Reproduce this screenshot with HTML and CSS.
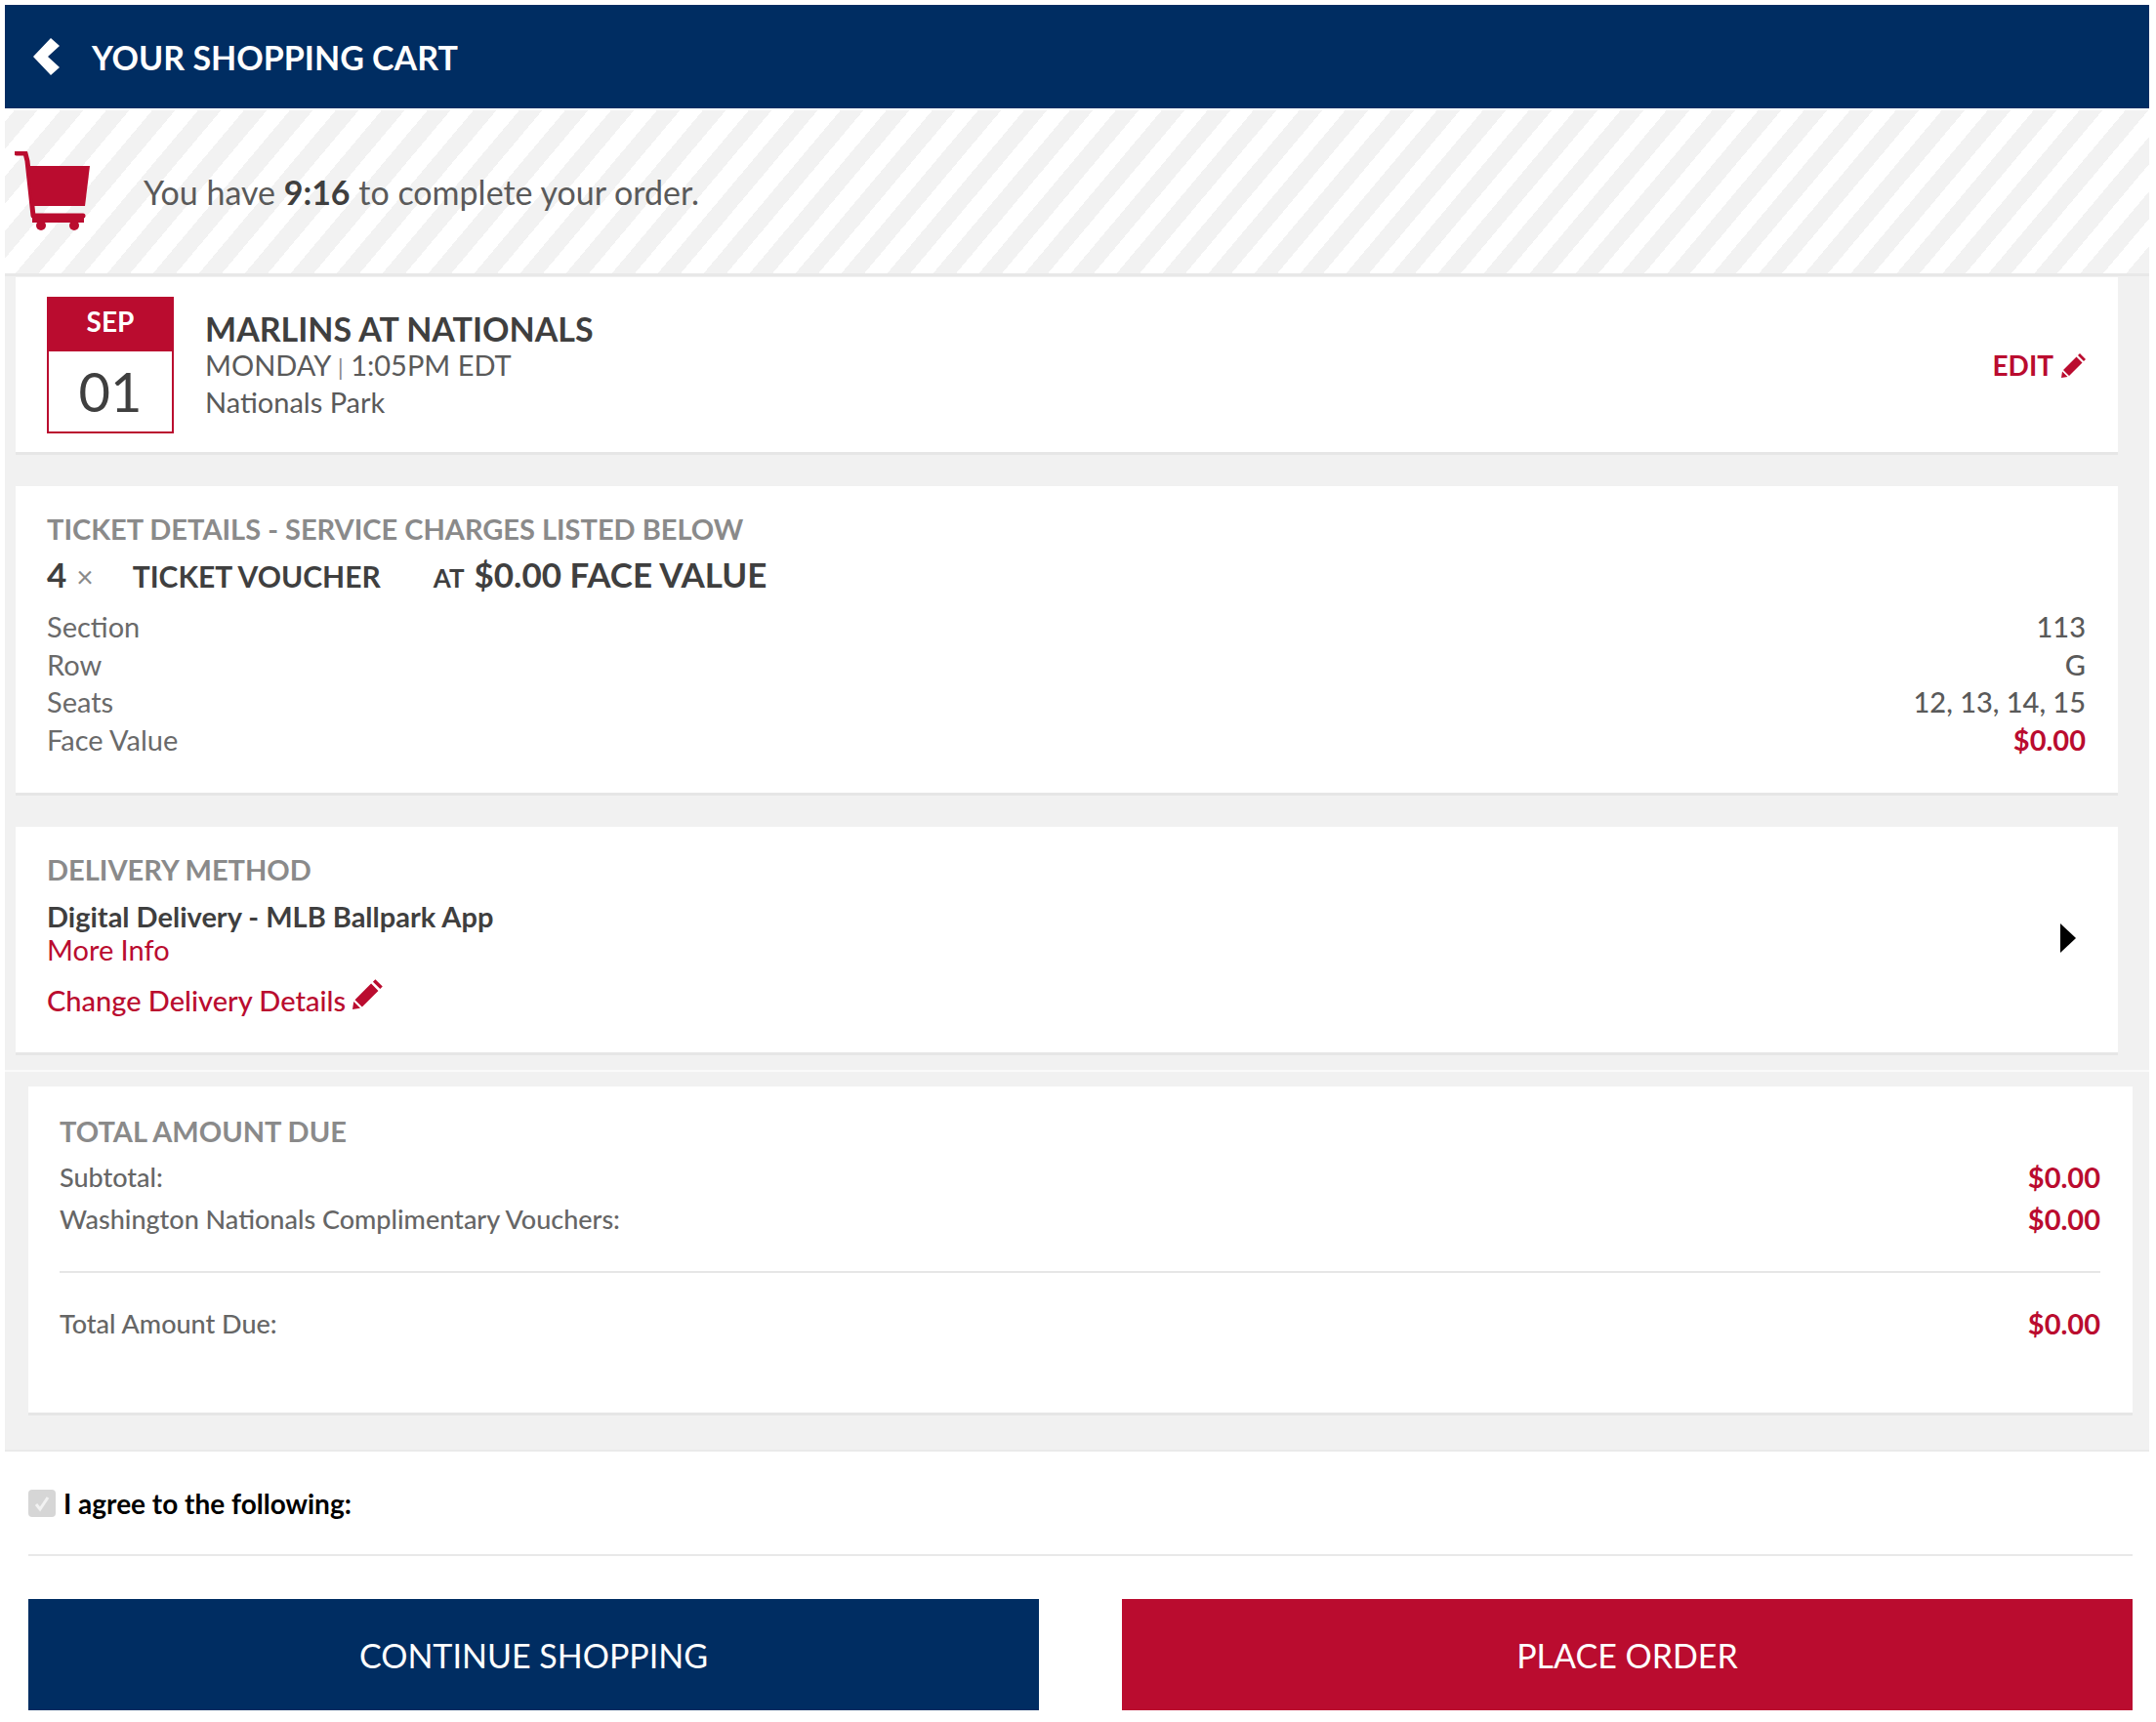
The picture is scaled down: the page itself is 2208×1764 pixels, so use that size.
FILE: index.html
```html
<!DOCTYPE html>
<html lang="en">
<head>
    <meta charset="UTF-8">
    <title>Your Shopping Cart</title>
    <link rel="stylesheet" href="styles.css">
</head>
<body>
    <div class="page">
        <header class="top-bar">
            <svg class="back-icon" viewBox="0 0 30 40"><path d="M20 1 L29 9 L17 20 L29 31 L20 39 L2 20 Z" fill="#fff"/></svg>
            <h1>YOUR SHOPPING CART</h1>
        </header>

        <div class="timer">
            <svg class="cart-icon" viewBox="0 0 80 82">
                <path d="M2 2 H11 L13 10 L19 66 H70" fill="none" stroke="#ba0c2f" stroke-width="5" stroke-linecap="round" stroke-linejoin="round"/>
                <path d="M14 15 H77 L72 56 H19 Z" fill="#ba0c2f"/>
                <path d="M18 66 H71 V73 H18 Z" fill="#ba0c2f"/>
                <circle cx="27" cy="76" r="5" fill="#ba0c2f"/>
                <circle cx="61" cy="76" r="5" fill="#ba0c2f"/>
            </svg>
            <p>You have <b>9:16</b> to complete your order.</p>
        </div>

        <div class="grey-area">
            <section class="card event">
                <div class="date-box">
                    <div class="month">SEP</div>
                    <div class="day">01</div>
                </div>
                <div class="event-info">
                    <h2>MARLINS AT NATIONALS</h2>
                    <div>MONDAY <span class="pipe">|</span> 1:05PM EDT</div>
                    <div>Nationals Park</div>
                </div>
                <a class="edit">EDIT
                    <svg class="pencil" viewBox="0 0 26 26"><path d="M19 1 L25 7 L23 9 L17 3 Z M15.500 4.500 L21.500 10.500 L8 24 L2 18 Z M1 19.500 L6.500 25 L0 26 Z" fill="#ba0c2f"/></svg>
                </a>
            </section>

            <section class="card tickets">
                <h3>TICKET DETAILS - SERVICE CHARGES LISTED BELOW</h3>
                <div class="ticket-line">
                    <span class="qty">4</span><span class="times">×</span>
                    <span class="ticket-type">TICKET VOUCHER</span>
                    <span class="at">AT</span> <span class="face">$0.00 FACE VALUE</span>
                </div>
                <div class="info-row"><span>Section</span><span class="val">113</span></div>
                <div class="info-row"><span>Row</span><span class="val">G</span></div>
                <div class="info-row"><span>Seats</span><span class="val">12, 13, 14, 15</span></div>
                <div class="info-row"><span>Face Value</span><span class="val red">$0.00</span></div>
            </section>

            <section class="card delivery">
                <div>
                    <h3>DELIVERY METHOD</h3>
                    <div class="method">Digital Delivery - MLB Ballpark App</div>
                    <a class="more-info">More Info</a>
                    <a class="change">Change Delivery Details
                        <svg class="pencil big" viewBox="0 0 26 26"><path d="M19 1 L25 7 L23 9 L17 3 Z M15.500 4.500 L21.500 10.500 L8 24 L2 18 Z M1 19.500 L6.500 25 L0 26 Z" fill="#ba0c2f"/></svg>
                    </a>
                </div>
                <svg class="arrow" viewBox="0 0 18 32"><path d="M1 1 L17 16 L1 31 Z" fill="#000"/></svg>
            </section>

            <div class="split"></div>

            <section class="card totals">
                <h3>TOTAL AMOUNT DUE</h3>
                <div class="total-row"><span>Subtotal:</span><span class="amount">$0.00</span></div>
                <div class="total-row"><span>Washington Nationals Complimentary Vouchers:</span><span class="amount">$0.00</span></div>
                <hr>
                <div class="total-row"><span>Total Amount Due:</span><span class="amount">$0.00</span></div>
            </section>
        </div>

        <div class="bottom">
            <label class="agree">
                <span class="check">
                    <svg viewBox="0 0 28 28"><path d="M8 15 L12 20 L20 8" fill="none" stroke="#f2f2f2" stroke-width="3"/></svg>
                </span>
                I agree to the following:
            </label>
            <div class="buttons">
                <button class="btn navy">CONTINUE SHOPPING</button>
                <button class="btn crimson">PLACE ORDER</button>
            </div>
        </div>
    </div>
</body>
</html>
```

FILE: styles.css
```css
* {
    box-sizing: border-box;
}

body {
    margin: 0;
    background-color: #fff;
    font-family: 'Lato', sans-serif;
    color: #5a5a5a;
}

.page {
    padding: 5px 7px 8px 5px;
}

.top-bar {
    height: 106px;
    background-color: #002d62;
    display: flex;
    align-items: center;
    padding-left: 27px;
}

.top-bar h1 {
    margin: 0 0 0 32px;
    font-size: 34px;
    font-weight: 700;
    color: #fff;
}

.back-icon {
    width: 30px;
    height: 40px;
}

.timer {
    height: 170px;
    margin-top: 2px;
    display: flex;
    align-items: center;
    padding-left: 10px;
    border-bottom: 3px solid #e8e8e8;
    background: repeating-linear-gradient(-50deg, #f2f2f2, #f2f2f2 18px, #fff 18px, #fff 36px);
}

.cart-icon {
    width: 80px;
    height: 82px;
    margin-right: 52px;
    margin-top: -2px;
}

.timer p {
    margin: 0;
    font-size: 34px;
    color: #5a5a5a;
}

.timer b {
    color: #3f3f3f;
}

.grey-area {
    background-color: #f1f1f1;
    padding: 1px 0 35px;
    border-bottom: 2px solid #eaeaea;
}

.card {
    background-color: #fff;
    margin: 0 32px 32px 11px;
    border-bottom: 3px solid #e6e6e6;
}

.card h3 {
    margin: 0;
    font-size: 29px;
    font-weight: 700;
    color: #8a8a8a;
}

.event {
    height: 182px;
    display: flex;
    align-items: center;
    padding: 0 32px;
}

.date-box {
    width: 130px;
    height: 140px;
    border: 2px solid #ba0c2f;
    margin-right: 32px;
    text-align: center;
}

.month {
    height: 56px;
    margin: -2px -2px 0;
    background-color: #ba0c2f;
    color: #fff;
    font-size: 28px;
    font-weight: 700;
    line-height: 50px;
}

.day {
    font-size: 56px;
    line-height: 82px;
    color: #3f3f3f;
}

.event-info {
    flex: 1;
    font-size: 29px;
    line-height: 36px;
}

.event-info h2 {
    margin: 0;
    font-size: 34px;
    line-height: 38px;
    font-weight: 700;
    color: #3f3f3f;
}

.pipe {
    font-size: 24px;
    color: #8a8a8a;
}

.edit {
    color: #ba0c2f;
    font-size: 28px;
    font-weight: 700;
    display: flex;
    align-items: center;
    gap: 8px;
}

.pencil {
    width: 26px;
    height: 26px;
}

.pencil.big {
    width: 32px;
    height: 32px;
    vertical-align: 2px;
}

.tickets {
    height: 317px;
    padding: 26px 33px 0 32px;
}

.ticket-line {
    display: flex;
    align-items: baseline;
    margin-top: 8px;
    margin-bottom: 12px;
    color: #3f3f3f;
    font-weight: 700;
    height: 44px;
}

.qty {
    font-size: 35px;
}

.times {
    font-size: 30px;
    font-weight: 400;
    color: #8a8a8a;
    margin-left: 10px;
    margin-right: 40px;
}

.ticket-type {
    font-size: 30px;
    margin-right: 54px;
}

.at {
    font-size: 26px;
    margin-right: 10px;
}

.face {
    font-size: 35px;
}

.info-row {
    display: flex;
    justify-content: space-between;
    font-size: 29px;
    line-height: 38.5px;
    color: #6a6a6a;
}

.val {
    color: #5a5a5a;
    font-weight: 500;
}

.red {
    color: #ba0c2f;
    font-weight: 700;
}

.delivery {
    height: 234px;
    margin-bottom: 0;
    padding: 26px 42px 0 32px;
    display: flex;
    justify-content: space-between;
    align-items: center;
}

.delivery > div {
    align-self: flex-start;
}

.method {
    margin-top: 14px;
    font-size: 29px;
    line-height: 34px;
    font-weight: 700;
    color: #3f3f3f;
}

.more-info,
.change {
    display: block;
    color: #ba0c2f;
    font-size: 29px;
    line-height: 34px;
}

.change {
    margin-top: 12px;
    font-weight: 500;
}

.arrow {
    width: 18px;
    height: 32px;
    margin-top: -30px;
}

.split {
    height: 2px;
    margin: 15px 0;
    background-color: #fafafa;
}

.totals {
    height: 337px;
    margin: 0 17px 0 24px;
    padding: 28px 33px 0 32px;
}

.total-row {
    display: flex;
    justify-content: space-between;
    font-size: 27px;
    font-weight: 500;
    line-height: 43px;
    color: #666;
}

.totals h3 + .total-row {
    margin-top: 8px;
}

.amount {
    color: #ba0c2f;
    font-weight: 700;
    font-size: 29px;
}

.totals hr {
    border: none;
    border-top: 2px solid #e6e6e6;
    margin: 32px 0 30px;
}

.bottom {
    padding: 0 17px 0 24px;
}

.agree {
    height: 107px;
    display: flex;
    align-items: center;
    gap: 8px;
    border-bottom: 2px solid #e8e8e8;
    font-size: 28px;
    font-weight: 700;
    color: #000;
}

.check {
    width: 28px;
    height: 28px;
    background-color: #d6d6d6;
    border-radius: 4px;
    display: flex;
}

.buttons {
    display: flex;
    justify-content: space-between;
    margin-top: 44px;
}

.btn {
    width: 1035px;
    height: 114px;
    border: none;
    color: #fff;
    font-family: inherit;
    font-size: 34px;
}

.navy {
    background-color: #002d62;
}

.crimson {
    background-color: #ba0c2f;
}
```
